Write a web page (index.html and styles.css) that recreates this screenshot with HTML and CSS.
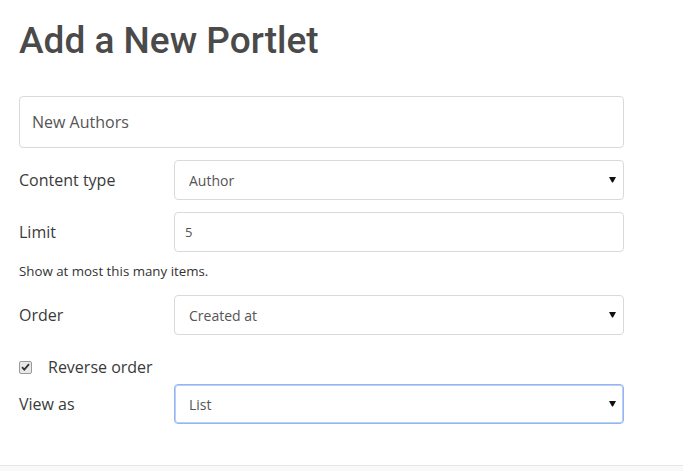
FILE: index.html
```html
<!DOCTYPE html>
<html>
<head>
<meta charset="utf-8">
<link rel="stylesheet" href="styles.css">
</head>
<body>
<div class="page">
  <div class="card">
    <h1 class="title">Add a New Portlet</h1>
    <form class="form">
      <input class="big-input" type="text" value="New Authors">
      <div class="row">
        <label class="label">Content type</label>
        <div class="select-wrap">
          <select class="control"><option>Author</option></select>
          <svg class="arrow" width="7" height="6" viewBox="0 0 7 6"><path d="M0 0H7L4 5.5H3Z" fill="#111"/></svg>
        </div>
      </div>
      <div class="row">
        <label class="label">Limit</label>
        <input class="control small-text" type="text" value="5">
      </div>
      <p class="help">Show at most this many items.</p>
      <div class="row">
        <label class="label">Order</label>
        <div class="select-wrap">
          <select class="control"><option>Created at</option></select>
          <svg class="arrow" width="7" height="6" viewBox="0 0 7 6"><path d="M0 0H7L4 5.5H3Z" fill="#111"/></svg>
        </div>
      </div>
      <label class="check-row">
        <span class="checkbox"><svg width="9" height="8" viewBox="0 0 9 8"><path d="M1 4.2L3.3 6.6L8 1.2" stroke="#333" stroke-width="1.8" fill="none"/></svg></span>
        <span class="check-label">Reverse order</span>
      </label>
      <div class="row row-last">
        <label class="label">View as</label>
        <div class="select-wrap">
          <select class="control focus"><option>List</option></select>
          <svg class="arrow" width="7" height="6" viewBox="0 0 7 6"><path d="M0 0H7L4 5.5H3Z" fill="#111"/></svg>
        </div>
      </div>
    </form>
  </div>
  <div class="footer"></div>
</div>
</body>
</html>
```

FILE: styles.css
```css
html, body {
  margin: 0;
  padding: 0;
  background: #fff;
}
body {
  font-family: "Open Sans", "Liberation Sans", sans-serif;
  color: #333;
}
.page {
  width: 683px;
  height: 471px;
  display: flex;
  flex-direction: column;
}
.card {
  height: 466px;
  box-sizing: border-box;
  padding: 18px 59px 0 19px;
  border-bottom: 1px solid #e6e6e6;
}
.title {
  margin: 0;
  font-family: Roboto, sans-serif;
  font-weight: 500;
  font-size: 37px;
  line-height: 46px;
  color: #4a4a4a;
}
.form {
  margin-top: 32px;
  display: flex;
  flex-direction: column;
}
.big-input {
  box-sizing: border-box;
  width: 605px;
  height: 52px;
  border: 1px solid #d9d9d9;
  border-radius: 4px;
  padding: 0 12px;
  font-family: "Open Sans", sans-serif;
  font-size: 16px;
  color: #555;
  outline: none;
  margin: 0 0 12px 0;
}
.row {
  display: flex;
  align-items: center;
  height: 40px;
  margin-bottom: 12px;
}
.label {
  width: 155px;
  font-size: 16px;
  color: #3a3a3a;
}
.select-wrap {
  position: relative;
  width: 450px;
  height: 40px;
}
.control {
  box-sizing: border-box;
  width: 450px;
  height: 40px;
  border: 1px solid #d9d9d9;
  border-radius: 4px;
  background: #fff;
  padding: 0 14px;
  font-family: "Open Sans", sans-serif;
  font-size: 14px;
  color: #555;
  outline: none;
  -webkit-appearance: none;
  appearance: none;
  margin: 0;
}
.small-text {
  padding: 0 10px;
  font-size: 13px;
}
.focus {
  border: 1px solid #93b6f2;
  box-shadow: inset 0 0 0 1px #b9cff5;
}
.arrow {
  position: absolute;
  right: 8px;
  top: 17px;
}
.help {
  margin: -2px 0 15px 0;
  font-size: 13.3px;
  line-height: 18px;
  color: #333;
}
.check-row {
  display: flex;
  align-items: center;
  height: 24px;
  margin: 8px 0 5px 0;
}
.checkbox {
  box-sizing: border-box;
  width: 13px;
  height: 13px;
  border: 1px solid #999;
  border-radius: 2px;
  background: #e8e8e8;
  display: flex;
  align-items: center;
  justify-content: center;
}
.check-label {
  margin-left: 16px;
  font-size: 16px;
  color: #3a3a3a;
}
.footer {
  flex: 1;
  background: #f9f9f9;
}
```
